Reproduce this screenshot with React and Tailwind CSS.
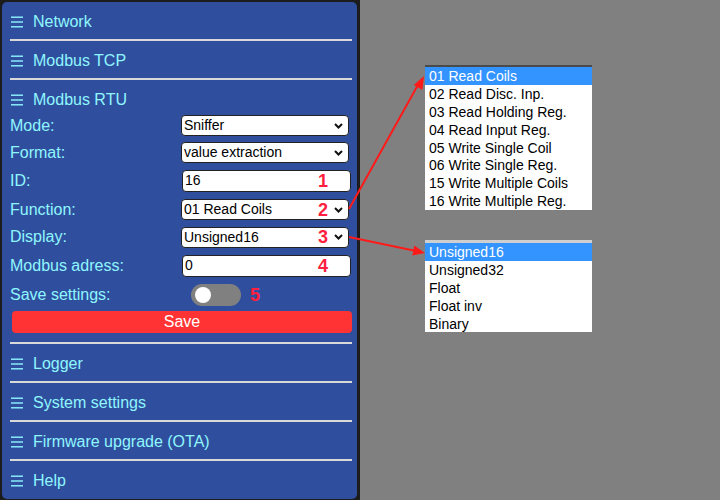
import React from 'react';

const font = { fontFamily: '"Liberation Sans", Arial, sans-serif' };

function Burger() {
  return (
    <svg width="12" height="12" viewBox="0 0 12 12" className="shrink-0">
      <rect x="0" y="0.5" width="12" height="1.4" fill="#8ff6ff" />
      <rect x="0" y="5.3" width="12" height="1.4" fill="#8ff6ff" />
      <rect x="0" y="10.1" width="12" height="1.4" fill="#8ff6ff" />
    </svg>
  );
}

function Heading({ title, className = 'h-[37px] pt-[2px]' }) {
  return (
    <div className={`flex items-center pl-[9px] gap-[10px] text-[16px] text-[#8ff6ff] ${className}`}>
      <Burger />
      <span>{title}</span>
    </div>
  );
}

function Divider() {
  return <div className="h-[2px] ml-[8px] mr-[5px] bg-[#d9d9d9] shrink-0" />;
}

function Badge({ n, left }) {
  return (
    <span className={`absolute top-1/2 -translate-y-1/2 ${left} text-[18px] font-bold text-[#ff1f3f] leading-none`}>{n}</span>
  );
}

function Chevron() {
  return (
    <svg width="9" height="6" viewBox="0 0 9 6" className="absolute right-[5px] top-1/2 -translate-y-1/2">
      <path d="M1 1 L4.5 4.5 L8 1" stroke="#111" strokeWidth="2" fill="none" />
    </svg>
  );
}

function FakeSelect({ value, n }) {
  return (
    <div className="relative w-[168px] h-[21px] bg-white border border-[#222] rounded-[4px] pl-[2px] flex items-center text-[14px] text-black">
      {value}
      {n && <Badge n={n} left="left-[136px]" />}
      <Chevron />
    </div>
  );
}

function FakeInput({ value, n }) {
  return (
    <div className="relative ml-[1px] w-[169px] h-[22px] bg-white border border-[#222] rounded-[4px] pl-[2px] flex items-center text-[14px] text-black">
      {value}
      {n && <Badge n={n} left="left-[135px]" />}
    </div>
  );
}

function Row({ label, h, children }) {
  return (
    <div className={`flex items-center pl-[8px] ${h}`}>
      <div className="w-[171px] text-[16px] text-[#8ff6ff]">{label}</div>
      {children}
    </div>
  );
}

const functions = [
  '01 Read Coils',
  '02 Read Disc. Inp.',
  '03 Read Holding Reg.',
  '04 Read Input Reg.',
  '05 Write Single Coil',
  '06 Write Single Reg.',
  '15 Write Multiple Coils',
  '16 Write Multiple Reg.',
];
const displays = ['Unsigned16', 'Unsigned32', 'Float', 'Float inv', 'Binary'];

function List({ items, className }) {
  return (
    <div className={`absolute left-[425px] w-[167px] bg-white ${className}`}>
      {items.map((it, i) => (
        <div
          key={it}
          className={`h-[17.9px] pl-[4px] pt-[1px] flex items-center text-[14px] ${i === 0 ? 'bg-[#3394ff] text-white' : 'text-black'}`}
        >{it}</div>
      ))}
    </div>
  );
}

export default function App() {
  return (
    <div className="relative w-[720px] h-[500px] bg-[#808080] overflow-hidden" style={font}>
      <div className="w-[360px] h-[500px] bg-[#1c1c1c] pl-[2px] pt-[2px] pr-[3px] pb-[1px]">
        <div className="h-full bg-[#2f4f9e] rounded-[5px] flex flex-col">
          <Heading title="Network" />
          <Divider />
          <Heading title="Modbus TCP" />
          <Divider />
          <Heading title="Modbus RTU" className="h-[32px] pt-[7px]" />
          <Row label="Mode:" h="h-[27px]"><FakeSelect value="Sniffer" /></Row>
          <Row label="Format:" h="h-[27px]"><FakeSelect value="value extraction" /></Row>
          <Row label="ID:" h="h-[29px]"><FakeInput value="16" n="1" /></Row>
          <Row label="Function:" h="h-[29px]"><FakeSelect value="01 Read Coils" n="2" /></Row>
          <Row label="Display:" h="h-[26px]"><FakeSelect value="Unsigned16" n="3" /></Row>
          <Row label="Modbus adress:" h="h-[31px]"><FakeInput value="0" n="4" /></Row>
          <Row label="Save settings:" h="h-[27px]">
            <div className="ml-[10px] w-[50px] h-[22px] rounded-full bg-[#808080] flex items-center pl-[4px]">
              <div className="w-[16px] h-[16px] rounded-full bg-white" />
            </div>
            <span className="ml-[9px] text-[18px] font-bold text-[#ff1f3f] leading-none">5</span>
          </Row>
          <div className="h-[28px] pt-[3px] pl-[10px]">
            <div className="w-[340px] h-[22px] bg-[#ff3333] rounded-[4px] flex items-center justify-center text-white text-[16px]">Save</div>
          </div>
          <div className="h-[6px]" />
          <Divider />
          <Heading title="Logger" />
          <Divider />
          <Heading title="System settings" />
          <Divider />
          <Heading title="Firmware upgrade (OTA)" />
          <Divider />
          <Heading title="Help" />
        </div>
      </div>

      <List items={functions} className="top-[65px] border-t-2 border-[#4a4a4a]" />
      <List items={displays} className="top-[240px] border-t-[3px] border-[#cfcfcf]" />

      <svg width="720" height="500" className="absolute inset-0 pointer-events-none">
        <line x1="349" y1="209" x2="419" y2="83" stroke="#ff1a1a" strokeWidth="2" />
        <polygon points="424,76 422.4,89.9 413.8,84.9" fill="#ff1a1a" />
        <line x1="349" y1="237" x2="416" y2="251" stroke="#ff1a1a" strokeWidth="2" />
        <polygon points="425,253 412.3,255.4 414.3,245.6" fill="#ff1a1a" />
      </svg>
    </div>
  );
}
